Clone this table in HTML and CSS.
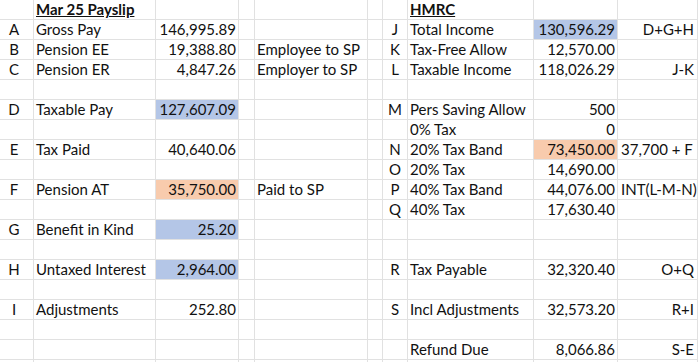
FILE: index.html
```html
<!DOCTYPE html>
<html>
<head>
<meta charset="utf-8">
<link rel="stylesheet" href="styles.css">
</head>
<body>
<div class="sheet">
  <!-- row 0 -->
  <div class="c"></div><div class="c lbl hd">Mar 25 Payslip</div><div class="c"></div><div class="c"></div><div class="c"></div><div class="c"></div><div class="c"></div><div class="c lbl hd">HMRC</div><div class="c"></div><div class="c"></div>
  <!-- row 1 -->
  <div class="c let">A</div><div class="c lbl">Gross Pay</div><div class="c num">146,995.89</div><div class="c"></div><div class="c"></div><div class="c"></div><div class="c let2">J</div><div class="c lbl">Total Income</div><div class="c num blue">130,596.29</div><div class="c fr">D+G+H</div>
  <!-- row 2 -->
  <div class="c let">B</div><div class="c lbl">Pension EE</div><div class="c num">19,388.80</div><div class="c"></div><div class="c note">Employee to SP</div><div class="c"></div><div class="c let2">K</div><div class="c lbl">Tax-Free Allow</div><div class="c num">12,570.00</div><div class="c"></div>
  <!-- row 3 -->
  <div class="c let">C</div><div class="c lbl">Pension ER</div><div class="c num">4,847.26</div><div class="c"></div><div class="c note">Employer to SP</div><div class="c"></div><div class="c let2">L</div><div class="c lbl">Taxable Income</div><div class="c num">118,026.29</div><div class="c fr">J-K</div>
  <!-- row 4 -->
  <div class="c"></div><div class="c"></div><div class="c"></div><div class="c"></div><div class="c"></div><div class="c"></div><div class="c"></div><div class="c"></div><div class="c"></div><div class="c"></div>
  <!-- row 5 -->
  <div class="c let">D</div><div class="c lbl">Taxable Pay</div><div class="c num blue">127,607.09</div><div class="c"></div><div class="c"></div><div class="c"></div><div class="c let2">M</div><div class="c lbl">Pers Saving Allow</div><div class="c num">500</div><div class="c"></div>
  <!-- row 6 -->
  <div class="c"></div><div class="c"></div><div class="c"></div><div class="c"></div><div class="c"></div><div class="c"></div><div class="c"></div><div class="c lbl">0% Tax</div><div class="c num">0</div><div class="c"></div>
  <!-- row 7 -->
  <div class="c let">E</div><div class="c lbl">Tax Paid</div><div class="c num">40,640.06</div><div class="c"></div><div class="c"></div><div class="c"></div><div class="c let2">N</div><div class="c lbl">20% Tax Band</div><div class="c num orange">73,450.00</div><div class="c fl">37,700 + F</div>
  <!-- row 8 -->
  <div class="c"></div><div class="c"></div><div class="c"></div><div class="c"></div><div class="c"></div><div class="c"></div><div class="c let2">O</div><div class="c lbl">20% Tax</div><div class="c num">14,690.00</div><div class="c"></div>
  <!-- row 9 -->
  <div class="c let">F</div><div class="c lbl">Pension AT</div><div class="c num orange">35,750.00</div><div class="c"></div><div class="c note">Paid to SP</div><div class="c"></div><div class="c let2">P</div><div class="c lbl">40% Tax Band</div><div class="c num">44,076.00</div><div class="c fl">INT(L-M-N)</div>
  <!-- row 10 -->
  <div class="c"></div><div class="c"></div><div class="c"></div><div class="c"></div><div class="c"></div><div class="c"></div><div class="c let2">Q</div><div class="c lbl">40% Tax</div><div class="c num">17,630.40</div><div class="c"></div>
  <!-- row 11 -->
  <div class="c let">G</div><div class="c lbl">Benefit in Kind</div><div class="c num blue">25.20</div><div class="c"></div><div class="c"></div><div class="c"></div><div class="c"></div><div class="c"></div><div class="c"></div><div class="c"></div>
  <!-- row 12 -->
  <div class="c"></div><div class="c"></div><div class="c"></div><div class="c"></div><div class="c"></div><div class="c"></div><div class="c"></div><div class="c"></div><div class="c"></div><div class="c"></div>
  <!-- row 13 -->
  <div class="c let">H</div><div class="c lbl">Untaxed Interest</div><div class="c num blue">2,964.00</div><div class="c"></div><div class="c"></div><div class="c"></div><div class="c let2">R</div><div class="c lbl">Tax Payable</div><div class="c num">32,320.40</div><div class="c fr">O+Q</div>
  <!-- row 14 -->
  <div class="c"></div><div class="c"></div><div class="c"></div><div class="c"></div><div class="c"></div><div class="c"></div><div class="c"></div><div class="c"></div><div class="c"></div><div class="c"></div>
  <!-- row 15 -->
  <div class="c let">I</div><div class="c lbl">Adjustments</div><div class="c num">252.80</div><div class="c"></div><div class="c"></div><div class="c"></div><div class="c let2">S</div><div class="c lbl">Incl Adjustments</div><div class="c num">32,573.20</div><div class="c fr">R+I</div>
  <!-- row 16 -->
  <div class="c"></div><div class="c"></div><div class="c"></div><div class="c"></div><div class="c"></div><div class="c"></div><div class="c"></div><div class="c"></div><div class="c"></div><div class="c"></div>
  <!-- row 17 -->
  <div class="c"></div><div class="c"></div><div class="c"></div><div class="c"></div><div class="c"></div><div class="c"></div><div class="c"></div><div class="c lbl">Refund Due</div><div class="c num">8,066.86</div><div class="c fr">S-E</div>
  <!-- row 18 -->
  <div class="c"></div><div class="c"></div><div class="c"></div><div class="c"></div><div class="c"></div><div class="c"></div><div class="c"></div><div class="c"></div><div class="c"></div><div class="c"></div>
</div>
</body>
</html>
```
FILE: styles.css
```css
html, body {
  margin: 0;
  padding: 0;
  background: #ffffff;
  overflow: hidden;
}
.sheet {
  display: grid;
  grid-template-columns: 34px 122px 83px 16px 113px 15px 25px 126px 84px 80px;
  grid-auto-rows: 20px;
  width: 698px;
  font-family: "Lato", "Open Sans", sans-serif;
  font-size: 15px;
  color: #111111;
}
.c {
  box-sizing: border-box;
  border-right: 1px solid #e1e1e1;
  border-bottom: 1px solid #e1e1e1;
  line-height: 19px;
  white-space: nowrap;
  overflow: visible;
}
.let {
  text-align: center;
  padding-right: 5px;
}
.let2 {
  text-align: center;
}
.lbl {
  padding-left: 2px;
}
.note {
  padding-left: 2px;
}
.hd {
  font-weight: bold;
  text-decoration: underline;
}
.num {
  text-align: right;
  padding-right: 2px;
}
.fr {
  text-align: right;
  padding-right: 3px;
}
.fl {
  padding-left: 3px;
}
.blue {
  background: #b4c6e7;
}
.orange {
  background: #f8cbad;
}
```
